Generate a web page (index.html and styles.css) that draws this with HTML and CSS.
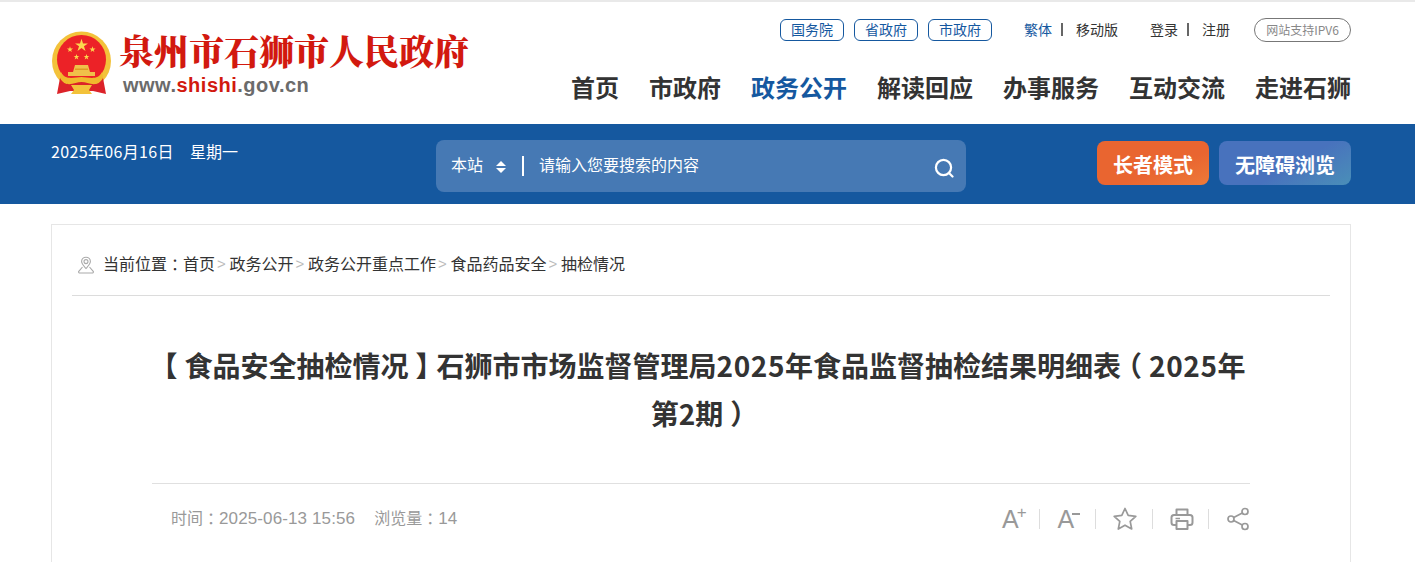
FILE: index.html
```html
<!DOCTYPE html>
<html lang="zh-CN">
<head>
    <meta charset="UTF-8">
    <title>石狮市人民政府</title>
    <link rel="stylesheet" href="styles.css">
</head>
<body>
    <!-- Header -->
    <header class="site-header">
        <div class="wrap header-inner">
            <a class="logo" href="#">
                <svg class="emblem" viewBox="0 0 60 66" width="60" height="66">
                    <defs>
                        <polygon id="star" points="0,-1 .224,-.309 .951,-.309 .363,.118 .588,.809 0,.382 -.588,.809 -.363,.118 -.951,-.309 -.224,-.309"/>
                    </defs>
                    <circle cx="30.5" cy="30" r="29.5" fill="#f3c23a"/>
                    <circle cx="30.5" cy="28.5" r="24.5" fill="#ec2227"/>
                    <g fill="#fbd84e">
                        <use href="#star" transform="translate(30.5 14.5) scale(6.8)"/>
                        <use href="#star" transform="translate(19 18.5) scale(3.2)"/>
                        <use href="#star" transform="translate(41.5 18.5) scale(3.2)"/>
                        <use href="#star" transform="translate(25.5 26) scale(3)"/>
                        <use href="#star" transform="translate(35.5 26) scale(3)"/>
                    </g>
                    <path d="M22 41 L24 34 H37 L39 41 H44 V45 H17 V41 Z" fill="#f0c04a"/>
                    <path d="M24 37.5 H37 V39 H24 Z" fill="#e09a24"/>
                    <path d="M9 47 L6 63 L19 60 H42 L55 63 L52 47 Z" fill="#dc2229"/>
                    <path d="M10 41 C14 50 24 46 30.5 46 C37 46 47 50 51 41 L52 47 C46 58 37 51 30.5 51 C24 51 15 58 9 47 Z" fill="#f0b92d"/>
                    <path d="M20 54 H41 L38 59 L41 63 H20 L23 59 Z" fill="#f3c23a"/>
                </svg>
                <div class="logo-text">
                    <div class="logo-name">泉州市石狮市人民政府</div>
                    <div class="logo-url">www.<span class="red">shishi</span>.gov.cn</div>
                </div>
            </a>
            <div class="header-right">
                <div class="top-links">
                    <a class="gov-tag" href="#">国务院</a>
                    <a class="gov-tag" href="#">省政府</a>
                    <a class="gov-tag" href="#">市政府</a>
                    <div class="link-pair lang">
                        <a class="blue" href="#">繁体</a><i></i><a href="#">移动版</a>
                    </div>
                    <div class="link-pair login">
                        <a href="#">登录</a><i></i><a href="#">注册</a>
                    </div>
                    <span class="ipv6">网站支持IPV6</span>
                </div>
                <nav class="main-nav">
                    <a href="#">首页</a>
                    <a href="#">市政府</a>
                    <a class="active" href="#">政务公开</a>
                    <a href="#">解读回应</a>
                    <a href="#">办事服务</a>
                    <a href="#">互动交流</a>
                    <a href="#">走进石狮</a>
                </nav>
            </div>
        </div>
    </header>

    <!-- Blue search band -->
    <div class="search-band">
        <div class="wrap band-inner">
            <div class="today">2025年06月16日<span>星期一</span></div>
            <div class="search-box">
                <span class="scope">本站</span>
                <span class="arrows"><b class="up"></b><b class="down"></b></span>
                <span class="sep"></span>
                <span class="placeholder">请输入您要搜索的内容</span>
                <svg class="search-icon" viewBox="0 0 20 20" width="20" height="20" fill="none" stroke="#fff" stroke-width="2.2">
                    <circle cx="9.5" cy="9.5" r="7.6"/>
                    <path d="M15 15 L18.5 18.5" stroke-linecap="round"/>
                </svg>
            </div>
            <div class="band-btns">
                <a class="band-btn elder" href="#">长者模式</a>
                <a class="band-btn access" href="#">无障碍浏览</a>
            </div>
        </div>
    </div>

    <!-- Article -->
    <main class="wrap article-card">
        <div class="crumbs">
            <svg class="pin" viewBox="0 0 18 18" width="18" height="18" fill="none" stroke="#aaa" stroke-width="1.1">
                <path d="M9 12.5 C6.5 9.8 4.6 8 4.6 5.6 A4.4 4.4 0 0 1 13.4 5.6 C13.4 8 11.5 9.8 9 12.5 Z"/>
                <circle cx="9" cy="5.6" r="2"/>
                <path d="M5.5 11 L1.6 15.6 C1.4 16.4 2 17 2.8 17 H15.2 C16 17 16.6 16.4 16.4 15.6 L12.5 11"/>
            </svg>
            <span>当前位置<span class="punct">：</span></span><a href="#">首页</a><em>&gt;</em><a href="#">政务公开</a><em>&gt;</em><a href="#">政务公开重点工作</a><em>&gt;</em><a href="#">食品药品安全</a><em>&gt;</em><a href="#">抽检情况</a>
        </div>
        <h1 class="article-title"><span class="punct">【</span>食品安全抽检情况<span class="punct">】</span>石狮市市场监督管理局<span class="digits">2025</span>年食品监督抽检结果明细表<span class="punct">（</span><span class="digits">2025</span>年<br>第2期<span class="punct">）</span></h1>
        <div class="meta-row">
            <div class="meta-text"><span>时间<span class="punct">：</span><b class="num">2025-06-13 15:56</b></span><span>浏览量<span class="punct">：</span><b class="num">14</b></span></div>
            <div class="tools">
                <span class="tool font-tool">A<sup>+</sup></span>
                <span class="tool font-tool">A<sup class="minus"></sup></span>
                <span class="tool">
                    <svg viewBox="0 0 24 24" width="24" height="24" fill="none" stroke="#999" stroke-width="1.7" stroke-linejoin="round">
                        <polygon points="12,1.5 15.2,8.4 22.8,9.3 17.2,14.4 18.7,22 12,18.2 5.3,22 6.8,14.4 1.2,9.3 8.8,8.4"/>
                    </svg>
                </span>
                <span class="tool">
                    <svg viewBox="0 0 24 24" width="24" height="24" fill="none" stroke="#999" stroke-width="2" stroke-linejoin="round">
                        <path d="M6.5 8 V2.5 H17.5 V8"/>
                        <path d="M6.5 18 H4 A2.5 2.5 0 0 1 1.5 15.5 V10.5 A2.5 2.5 0 0 1 4 8 H20 A2.5 2.5 0 0 1 22.5 10.5 V15.5 A2.5 2.5 0 0 1 20 18 H17.5"/>
                        <rect x="6.5" y="14" width="11" height="8"/>
                        <path d="M5.5 11.5 H10" stroke-width="1.5"/>
                    </svg>
                </span>
                <span class="tool">
                    <svg viewBox="0 0 24 24" width="24" height="24" fill="none" stroke="#999" stroke-width="1.7">
                        <circle cx="5" cy="12" r="3"/>
                        <circle cx="19" cy="4.5" r="3"/>
                        <circle cx="19" cy="19.5" r="3"/>
                        <path d="M7.7 10.6 L16.3 6 M7.7 13.4 L16.3 18"/>
                    </svg>
                </span>
            </div>
        </div>
    </main>
</body>
</html>
```

FILE: styles.css
```css
* {
    margin: 0;
    padding: 0;
    box-sizing: border-box;
}

html, body {
    height: 562px;
    overflow: hidden;
}

body {
    background: #fff;
    color: #333;
    font-family: "Noto Sans CJK SC", "Liberation Sans", sans-serif;
    font-size: 14px;
}

a {
    color: inherit;
    text-decoration: none;
}

.wrap {
    width: 1300px;
    margin-left: 51px;
}

/* half-width punctuation glyph padded back to 1em, so it sits centred */
.punct {
    padding: 0 0.25em;
    font-feature-settings: "halt";
}

/* Header */
.site-header {
    height: 124px;
    border-top: 2px solid #e9e9e9;
}

.header-inner {
    display: flex;
    justify-content: space-between;
}

.logo {
    display: flex;
    padding-top: 29px;
}

.emblem {
    flex: none;
    margin-right: 8px;
}

.logo-name {
    margin-top: 1px;
    height: 36px;
    color: #d2190f;
    font-family: "Noto Serif CJK SC", "Noto Sans CJK SC", sans-serif;
    font-size: 35px;
    font-weight: 900;
    line-height: 36px;
    white-space: nowrap;
}

.logo-url {
    margin: 5px 0 0 4px;
    color: #6b6b6b;
    font-family: "Liberation Sans", sans-serif;
    font-size: 20px;
    font-weight: 700;
    line-height: 24px;
    letter-spacing: 0.5px;
}

.logo-url .red {
    color: #d2190f;
}

.header-right {
    display: flex;
    flex-direction: column;
    align-items: flex-end;
}

.top-links {
    display: flex;
    align-items: center;
    height: 24px;
    margin-top: 16px;
    line-height: 20px;
}

.gov-tag {
    width: 64px;
    height: 22px;
    margin-right: 10px;
    border: 1px solid #15589f;
    border-radius: 6px;
    color: #15589f;
    line-height: 18px;
    text-align: center;
}

.link-pair {
    display: flex;
    align-items: center;
    margin-top: -2px;
}

.link-pair i {
    width: 2px;
    height: 13px;
    margin: 1px 13px 0 9px;
    background: #666;
}

.lang {
    margin-left: 22px;
}

.blue {
    color: #15589f;
}

.login {
    margin-left: 32px;
}

.ipv6 {
    width: 97px;
    height: 24px;
    margin-left: 24px;
    border: 1px solid #777;
    border-radius: 12px;
    color: #888;
    font-size: 12px;
    line-height: 22px;
    text-align: center;
}

.main-nav {
    display: flex;
    gap: 30px;
    margin-top: 27px;
    font-size: 24px;
    font-weight: 700;
    line-height: 36px;
    white-space: nowrap;
}

.main-nav .active {
    color: #15589f;
}

/* Search band */
.search-band {
    height: 80px;
    background: #15589f;
}

.band-inner {
    display: flex;
    height: 80px;
    color: #fff;
}

.today {
    width: 385px;
    padding-top: 17px;
    font-size: 16px;
    line-height: 20px;
    letter-spacing: 0.35px;
    white-space: nowrap;
}

.today span {
    margin-left: 16px;
    letter-spacing: 0;
}

.search-box {
    display: flex;
    align-items: center;
    width: 530px;
    height: 52px;
    margin-top: 16px;
    padding: 0 12px 0 15px;
    border-radius: 8px;
    background: #4679b4;
    font-size: 16px;
    line-height: 48px;
}

.scope,
.placeholder {
    margin-top: -5px;
}

.arrows {
    display: flex;
    flex-direction: column;
    gap: 2px;
    margin: 2px 0 0 13px;
}

.arrows b {
    width: 0;
    height: 0;
    border-left: 5px solid transparent;
    border-right: 5px solid transparent;
}

.arrows .up {
    border-bottom: 5px solid #fff;
}

.arrows .down {
    border-top: 5px solid #fff;
}

.sep {
    width: 2px;
    height: 20px;
    margin: 0 15px 0 16px;
    background: #fff;
}

.placeholder {
    flex: 1;
}

.search-icon {
    margin-top: 4px;
}

.band-btns {
    display: flex;
    gap: 10px;
    margin-top: 17px;
    margin-left: auto;
}

.band-btn {
    height: 44px;
    border-radius: 8px;
    color: #fff;
    font-size: 20px;
    font-weight: 700;
    line-height: 47px;
    text-align: center;
}

.elder {
    width: 112px;
    background: linear-gradient(160deg, #e96530 60%, #ee7a38);
}

.access {
    width: 132px;
    background: linear-gradient(150deg, #4872bd 55%, #4a8fb8);
}

/* Article: runs on below the window, so no bottom edge here */
.article-card {
    height: 338px;
    margin-top: 20px;
    padding: 0 20px;
    border: 1px solid #e6e6e6;
    border-bottom: 0;
}

.crumbs {
    display: flex;
    align-items: center;
    height: 71px;
    padding: 6px 0 0 5px;
    border-bottom: 1px solid #dcdcdc;
    font-size: 16px;
    white-space: nowrap;
}

.pin {
    flex: none;
    margin: 3px 8px 0 0;
}

.crumbs em {
    width: 14.5px;
    padding-left: 2px;
    color: #bbb;
    font-family: "Liberation Sans", sans-serif;
    font-style: normal;
    font-size: 15px;
}

.article-title {
    width: 1098px;
    margin: 45px auto 0;
    color: #333;
    font-size: 28px;
    font-weight: 700;
    line-height: 48px;
    text-align: center;
}

.digits {
    letter-spacing: 0.6px;
}

.meta-row {
    display: flex;
    align-items: center;
    justify-content: space-between;
    width: 1098px;
    height: 70px;
    margin: 46px auto 0;
    padding: 0 0 0 19px;
    border-top: 1px solid #e0e0e0;
    color: #999;
    font-size: 16px;
}

.meta-text {
    margin-top: -4px;
}

.meta-text > span + span {
    margin-left: 19px;
}

.num {
    font-family: "Liberation Sans", sans-serif;
    font-size: 17px;
    font-weight: 400;
    letter-spacing: 0.12px;
}

.tools {
    display: flex;
    align-items: center;
}

.tool {
    display: flex;
    align-items: center;
    width: 56.5px;
    height: 20px;
    padding-left: 17px;
    border-left: 1px solid #ddd;
}

.tool:first-child {
    border-left: 0;
    padding-left: 20px;
}

.tool:last-child {
    width: 42px;
}

.font-tool {
    padding-left: 18px;
    color: #999;
    font-family: "Liberation Sans", sans-serif;
    font-size: 25px;
    line-height: 20px;
}

.font-tool sup {
    margin: -12px 0 0 -2px;
    font-size: 17px;
    line-height: 10px;
}

.font-tool .minus {
    width: 8px;
    height: 2px;
    margin: -10px 0 0 -2px;
    background: #999;
}
```
